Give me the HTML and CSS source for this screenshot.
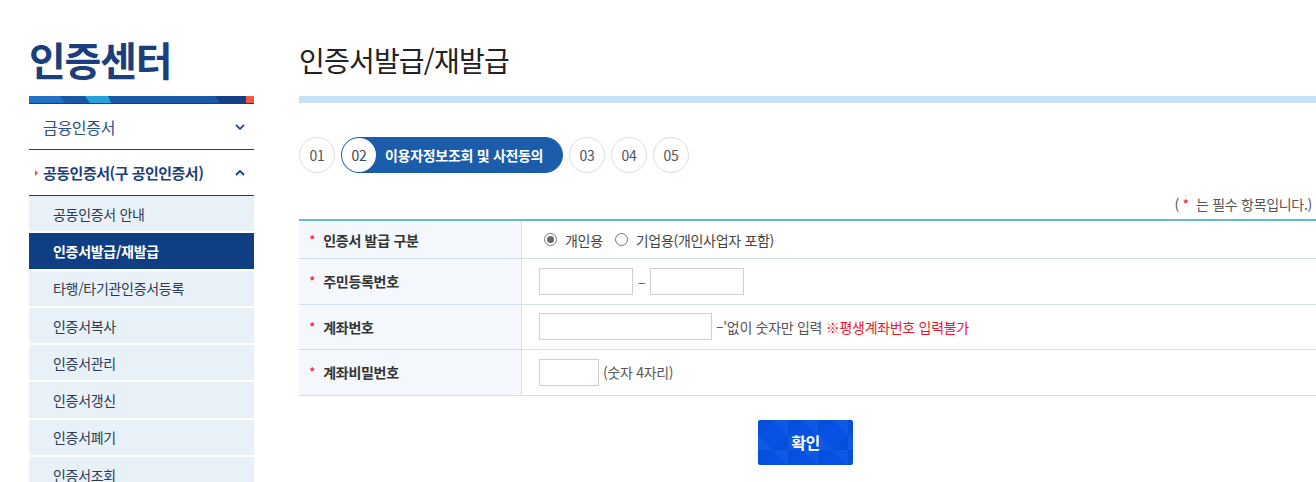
FILE: index.html
```html
<!DOCTYPE html>
<html lang="ko">
<head>
<meta charset="utf-8">
<title>인증센터 - 인증서발급/재발급</title>
<link rel="stylesheet" href="styles.css">
</head>
<body>
<div class="page">
  <aside class="side">
    <h1 class="side-title">인증센터</h1>
    <svg class="stripe" width="225" height="8" viewBox="0 0 225 8" aria-hidden="true">
      <rect x="0" y="0" width="225" height="7" fill="#1759a8"/>
      <polygon points="0,0 31,0 36,7 0,7" fill="#2172c2"/>
      <polygon points="56,0 79,0 82,7 61,7" fill="#24a2dc"/>
      <polygon points="186,0 217,0 217,7 191,7" fill="#153f86"/>
      <rect x="217" y="0" width="8" height="7" fill="#ef5b45"/>
      <rect x="0" y="7" width="225" height="1" fill="#143e7c"/>
    </svg>
    <nav class="menu">
      <div class="menu-item">
        <span class="menu-label">금융인증서</span>
        <svg class="chev" width="10" height="6" viewBox="0 0 10 6" aria-hidden="true"><path d="M1 1 L5 5 L9 1" fill="none" stroke="#2c4f86" stroke-width="1.8"/></svg>
      </div>
      <div class="menu-item open">
        <span class="marker"></span>
        <span class="menu-label">공동인증서(구 공인인증서)</span>
        <svg class="chev" width="10" height="6" viewBox="0 0 10 6" aria-hidden="true"><path d="M1 5 L5 1 L9 5" fill="none" stroke="#1b3f7c" stroke-width="1.8"/></svg>
      </div>
      <ul class="sub">
        <li class="sub-item">공동인증서 안내</li>
        <li class="sub-item active">인증서발급/재발급</li>
        <li class="sub-item">타행/타기관인증서등록</li>
        <li class="sub-item">인증서복사</li>
        <li class="sub-item">인증서관리</li>
        <li class="sub-item">인증서갱신</li>
        <li class="sub-item">인증서폐기</li>
        <li class="sub-item">인증서조회</li>
      </ul>
    </nav>
  </aside>

  <main class="main">
    <h2 class="page-title">인증서발급/재발급</h2>
    <div class="title-bar"></div>

    <ol class="steps">
      <li class="step">01</li>
      <li class="step active"><span class="step-num">02</span><span class="step-text">이용자정보조회 및 사전동의</span></li>
      <li class="step">03</li>
      <li class="step">04</li>
      <li class="step">05</li>
    </ol>

    <p class="notice">( <span class="req">*</span> &nbsp;는 필수 항목입니다.)</p>

    <div class="form">
      <div class="row row-first">
        <div class="label"><span class="req">*</span>인증서 발급 구분</div>
        <div class="value radios">
          <label class="radio"><span class="dot checked"></span>개인용</label>
          <label class="radio"><span class="dot"></span>기업용(개인사업자 포함)</label>
        </div>
      </div>
      <div class="row">
        <div class="label"><span class="req">*</span>주민등록번호</div>
        <div class="value">
          <span class="input w94"></span>
          <span class="dash">–</span>
          <span class="input w94"></span>
        </div>
      </div>
      <div class="row">
        <div class="label"><span class="req">*</span>계좌번호</div>
        <div class="value">
          <span class="input w173"></span>
          <span class="hint">–'없이 숫자만 입력 <span class="warn">※평생계좌번호 입력불가</span></span>
        </div>
      </div>
      <div class="row">
        <div class="label"><span class="req">*</span>계좌비밀번호</div>
        <div class="value">
          <span class="input w60"></span>
          <span class="hint">(숫자 4자리)</span>
        </div>
      </div>
    </div>

    <div class="actions">
      <button class="btn" type="button">확인</button>
    </div>
  </main>
</div>
</body>
</html>
```

FILE: styles.css
```css
html, body {
  margin: 0;
  padding: 0;
  background: #fff;
}
body {
  font-family: "Noto Sans CJK KR", "Noto Sans", sans-serif;
  color: #333;
  overflow: hidden;
  width: 1316px;
  height: 482px;
}
.page {
  display: flex;
  gap: 45px;
  padding-left: 29px;
}

/* ---------- sidebar ---------- */
.side {
  width: 225px;
  flex: none;
}
.side-title {
  margin: 0;
  padding-top: 39px;
  height: 40px;
  font-size: 40px;
  line-height: 40px;
  font-weight: 700;
  letter-spacing: -1.2px;
  color: #1b3f7c;
}
.stripe {
  display: block;
  margin-top: 17px;
}
.menu-item {
  position: relative;
  display: flex;
  align-items: center;
  justify-content: space-between;
  height: 46px;
  box-sizing: border-box;
  border-bottom: 1px solid #1b3f7c;
  padding: 0 9px 0 14px;
}
.menu-label {
  font-size: 16px;
  line-height: 20px;
  letter-spacing: -0.3px;
  color: #2c4f86;
}
.menu-item.open .menu-label {
  font-size: 15px;
  font-weight: 700;
  color: #1b3f7c;
  letter-spacing: -0.5px;
}
.marker {
  position: absolute;
  left: 6px;
  top: 20px;
  width: 0;
  height: 0;
  border-top: 3px solid transparent;
  border-bottom: 3px solid transparent;
  border-left: 3px solid #e8553e;
}
.chev {
  display: block;
}
.sub {
  list-style: none;
  margin: 0;
  padding: 0;
  display: flex;
  flex-direction: column;
  gap: 2px;
}
.sub-item {
  height: 35.3px;
  display: flex;
  align-items: center;
  padding-left: 24px;
  background: #e8f1f8;
  font-size: 14px;
  letter-spacing: -0.3px;
  color: #2d3a52;
}
.sub-item.active {
  background: #0f3f82;
  color: #fff;
  font-weight: 700;
}

/* ---------- main ---------- */
.main {
  width: 1013px;
  flex: none;
}
.page-title {
  margin: 0;
  padding-top: 46px;
  font-size: 28px;
  line-height: 28px;
  font-weight: 400;
  letter-spacing: -0.8px;
  color: #222;
}
.title-bar {
  margin-top: 22px;
  margin-right: -10px;
  height: 7px;
  background: #c4e4f5;
}
.steps {
  list-style: none;
  margin: 34px 0 0;
  padding: 0;
  display: flex;
  gap: 6px;
}
.step {
  width: 36px;
  height: 36px;
  box-sizing: border-box;
  border: 1px solid #dcdcdc;
  border-radius: 50%;
  display: flex;
  align-items: center;
  justify-content: center;
  font-size: 14px;
  color: #555;
  letter-spacing: -0.3px;
}
.step.active {
  width: 222px;
  border-radius: 18px;
  border: 1px solid #1b5daa;
  background: #1b5daa;
  justify-content: flex-start;
  padding: 0;
}
.step-num {
  width: 34px;
  height: 34px;
  border-radius: 50%;
  background: #fff;
  display: flex;
  align-items: center;
  justify-content: center;
  flex: none;
  color: #444;
}
.step-text {
  margin-left: 9px;
  color: #fff;
  font-size: 14px;
  font-weight: 700;
  letter-spacing: -0.3px;
}
.notice {
  margin: 22px 0 0;
  height: 18px;
  line-height: 18px;
  text-align: right;
  font-size: 14px;
  letter-spacing: -0.3px;
  color: #555;
}
.req {
  color: #e60f2d;
}
.form {
  margin-top: 6px;
  margin-right: -10px;
  border-top: 2px solid #62b5e8;
}
.row {
  display: grid;
  grid-template-columns: 223px 1fr;
  height: 45.5px;
  box-sizing: border-box;
  border-bottom: 1px solid #d3e0ec;
}
.row.row-first {
  height: 38px;
}
.label {
  display: flex;
  align-items: center;
  background: #f4f8fc;
  border-right: 1px solid #d3e0ec;
  padding-left: 10px;
  font-size: 14px;
  font-weight: 700;
  letter-spacing: -0.3px;
  color: #333;
}
.label .req {
  font-weight: 400;
  margin-right: 8px;
}
.value {
  display: flex;
  align-items: center;
  padding-left: 17px;
  font-size: 14px;
  letter-spacing: -0.3px;
  color: #444;
}
.radios {
  padding-left: 22px;
}
.radio {
  display: flex;
  align-items: center;
  margin-right: 12px;
}
.dot {
  width: 13px;
  height: 13px;
  box-sizing: border-box;
  border: 1px solid #777;
  border-radius: 50%;
  margin-right: 8px;
  display: flex;
  align-items: center;
  justify-content: center;
}
.dot.checked::after {
  content: "";
  width: 7px;
  height: 7px;
  border-radius: 50%;
  background: #666;
}
.input {
  display: block;
  height: 27px;
  box-sizing: border-box;
  border: 1px solid #cfcfcf;
  background: #fff;
}
.w94 { width: 94px; }
.w173 { width: 173px; }
.w60 { width: 60px; }
.dash {
  margin: 0 5px;
  color: #555;
}
.hint {
  margin-left: 4px;
  color: #555;
}
.warn {
  color: #f0142d;
}
.actions {
  margin-top: 24px;
  display: flex;
  justify-content: center;
}
.btn {
  width: 95px;
  height: 45px;
  border: 0;
  border-radius: 2px;
  background-color: #0652e2;
  background-image:
    linear-gradient(45deg, rgba(255,255,255,0.04) 25%, transparent 25%, transparent 75%, rgba(255,255,255,0.04) 75%),
    linear-gradient(-45deg, rgba(0,0,0,0.03) 25%, transparent 25%, transparent 75%, rgba(0,0,0,0.03) 75%);
  background-size: 30px 30px;
  color: #fff;
  font-family: "Noto Sans CJK KR", "Noto Sans", sans-serif;
  font-size: 16px;
  font-weight: 700;
  letter-spacing: -0.5px;
  padding: 0;
}
```
